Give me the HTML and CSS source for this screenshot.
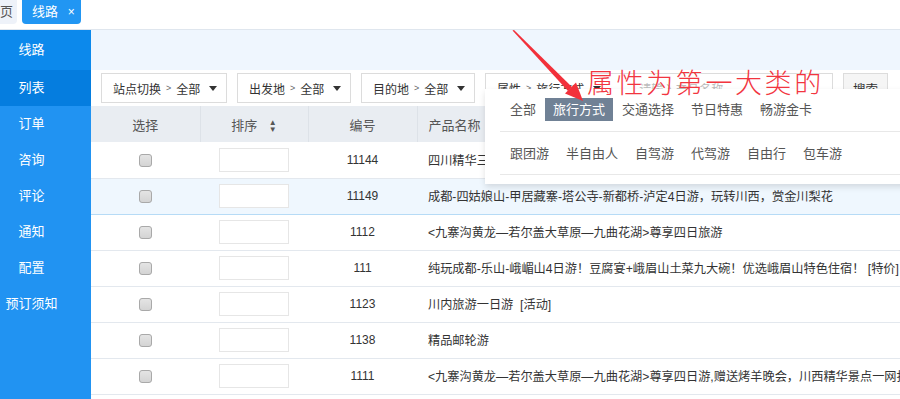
FILE: index.html
```html
<!DOCTYPE html>
<html lang="zh-CN">
<head>
    <meta charset="UTF-8">
    <title>线路列表</title>
    <link rel="stylesheet" href="styles.css">
</head>
<body>
    <div class="tabs">
        <div class="tab">页</div>
        <div class="tab active">线路 <span class="close">×</span></div>
    </div>

    <div class="layout">
        <div class="sidebar">
            <div class="menu-title">线路</div>
            <div class="menu-item current">列表</div>
            <div class="menu-item">订单</div>
            <div class="menu-item">咨询</div>
            <div class="menu-item">评论</div>
            <div class="menu-item">通知</div>
            <div class="menu-item">配置</div>
            <div class="menu-item">预订须知</div>
        </div>

        <div class="main">
            <div class="band"></div>

            <div class="filters">
                <div class="select w1">站点切换 <span class="sep">&gt;</span> 全部 <i class="caret"></i></div>
                <div class="select w2">出发地 <span class="sep">&gt;</span> 全部 <i class="caret"></i></div>
                <div class="select w2">目的地 <span class="sep">&gt;</span> 全部 <i class="caret"></i></div>
                <div class="select attr">属性 <span class="sep">&gt;</span> 旅行方式 <i class="caret"></i>
                    <span class="placeholder">请输入产品名称</span>
                </div>
                <button class="search">搜索</button>
            </div>

            <table class="grid">
                <colgroup>
                    <col style="width:109px">
                    <col style="width:108px">
                    <col style="width:109px">
                    <col>
                </colgroup>
                <thead>
                    <tr>
                        <th>选择</th>
                        <th>排序 <span class="sort">&#9650;<br>&#9660;</span></th>
                        <th>编号</th>
                        <th class="name">产品名称</th>
                    </tr>
                </thead>
                <tbody>
                    <tr>
                        <td><input type="checkbox"></td>
                        <td><input type="text" class="order"></td>
                        <td>11144</td>
                        <td class="name">四川精华三日游</td>
                    </tr>
                    <tr class="hover">
                        <td><input type="checkbox"></td>
                        <td><input type="text" class="order"></td>
                        <td>11149</td>
                        <td class="name">成都-四姑娘山-甲居藏寨-塔公寺-新都桥-泸定4日游，玩转川西，赏金川梨花</td>
                    </tr>
                    <tr>
                        <td><input type="checkbox"></td>
                        <td><input type="text" class="order"></td>
                        <td>1112</td>
                        <td class="name">&lt;九寨沟黄龙—若尔盖大草原—九曲花湖&gt;尊享四日旅游</td>
                    </tr>
                    <tr>
                        <td><input type="checkbox"></td>
                        <td><input type="text" class="order"></td>
                        <td>111</td>
                        <td class="name">纯玩成都-乐山-峨嵋山4日游！豆腐宴+峨眉山土菜九大碗！优选峨眉山特色住宿！ [特价]</td>
                    </tr>
                    <tr>
                        <td><input type="checkbox"></td>
                        <td><input type="text" class="order"></td>
                        <td>1123</td>
                        <td class="name">川内旅游一日游 &nbsp;[活动]</td>
                    </tr>
                    <tr>
                        <td><input type="checkbox"></td>
                        <td><input type="text" class="order"></td>
                        <td>1138</td>
                        <td class="name">精品邮轮游</td>
                    </tr>
                    <tr>
                        <td><input type="checkbox"></td>
                        <td><input type="text" class="order"></td>
                        <td>1111</td>
                        <td class="name">&lt;九寨沟黄龙—若尔盖大草原—九曲花湖&gt;尊享四日游,赠送烤羊晚会，川西精华景点一网打尽</td>
                    </tr>
                    <tr>
                        <td><input type="checkbox"></td>
                        <td><input type="text" class="order"></td>
                        <td>1110</td>
                        <td class="name">成都周边二日游</td>
                    </tr>
                </tbody>
            </table>

            <!-- attribute dropdown, open -->
            <div class="attr-menu">
                <div class="attr-row">
                    <span class="opt">全部</span>
                    <span class="opt on">旅行方式</span>
                    <span class="opt">交通选择</span>
                    <span class="opt">节日特惠</span>
                    <span class="opt">畅游金卡</span>
                </div>
                <div class="attr-row">
                    <span class="opt">跟团游</span>
                    <span class="opt">半自由人</span>
                    <span class="opt">自驾游</span>
                    <span class="opt">代驾游</span>
                    <span class="opt">自由行</span>
                    <span class="opt">包车游</span>
                </div>
            </div>
        </div>
    </div>

    <!-- annotation -->
    <svg class="arrow" width="900" height="399" viewBox="0 0 900 399">
        <polygon points="512.5,30.5 514,30 572,87 568,91" fill="#f2303a"/>
        <polygon points="583,101 576,82.5 565,93.5" fill="#f2303a"/>
    </svg>
    <div class="note">属性为第一大类的</div>
</body>
</html>
```

FILE: styles.css
```css
* {
    box-sizing: border-box;
    margin: 0;
    padding: 0;
}

body {
    font-family: "Liberation Sans", "Noto Sans CJK SC", sans-serif;
    font-size: 12px;
    color: #333;
    background: #fff;
    width: 900px;
    height: 399px;
    overflow: hidden;
    position: relative;
}

.tabs {
    height: 30px;
    display: flex;
    gap: 5px;
    border-bottom: 1px solid #dfe6ee;
}

.tab {
    height: 24px;
    line-height: 23px;
    padding: 0 6px 0 0;
    background: #eef2f9;
    color: #555;
    font-size: 13px;
    border-radius: 0 0 4px 0;
    width: 17px;
    overflow: hidden;
    text-align: right;
}

.tab.active {
    width: 59px;
    background: #2196f3;
    color: #fff;
    padding: 0 0 0 10px;
    text-align: left;
    border-radius: 0 0 4px 4px;
}

.tab .close {
    font-size: 12px;
    margin-left: 6px;
}

.layout {
    display: flex;
    height: 369px;
}

.sidebar {
    width: 91px;
    flex: none;
    background: #2193f2;
    color: #fff;
    font-size: 13px;
}

.menu-title {
    height: 40px;
    line-height: 40px;
    background: #0c89ec;
    padding-right: 28px;
    text-align: center;
}

.menu-item {
    height: 36px;
    line-height: 36px;
    padding-right: 28px;
    text-align: center;
}

.menu-item.current {
    background: #057ddf;
}

.main {
    flex: 1;
    position: relative;
    overflow: hidden;
}

.band {
    height: 40px;
    background: #eff6fe;
}

.filters {
    display: flex;
    gap: 10px;
    padding: 3px 10px;
    height: 36px;
}

.select {
    height: 30px;
    border: 1px solid #dcdcdc;
    background: #fff;
    display: flex;
    align-items: center;
    padding: 0 11px;
    color: #333;
    font-size: 12px;
    white-space: nowrap;
}

.select.w1 { width: 126px; }
.select.w2 { width: 114px; }
.select.attr { width: 348px; }

.sep {
    font-size: 9px;
    color: #666;
    margin: 0 5px;
}

.caret {
    display: inline-block;
    border-left: 4px solid transparent;
    border-right: 4px solid transparent;
    border-top: 5px solid #333;
    margin-left: 9px;
}

.placeholder {
    color: #bbb;
    margin-left: 38px;
}

.search {
    width: 45px;
    height: 30px;
    border: 1px solid #dcdcdc;
    background: #f5f5f5;
    font-family: inherit;
    font-size: 12.5px;
    color: #333;
}

.grid {
    width: 100%;
    border-collapse: collapse;
    table-layout: fixed;
}

.grid th {
    height: 36px;
    background: #e9edf2;
    color: #555;
    font-weight: normal;
    font-size: 13px;
    border-left: 1px solid #dde2e8;
    text-align: center;
}

.grid th:first-child {
    border-left: none;
}

.grid td {
    height: 36px;
    text-align: center;
    border-bottom: 1px solid #e3e8ee;
    white-space: nowrap;
    overflow: hidden;
}

.grid td.name {
    text-align: left;
    padding-left: 11px;
    font-size: 12.2px;
}

.grid th.name {
    text-align: left;
    padding-left: 11px;
}

.grid tr.hover td {
    background: #eff7fe;
    border-bottom-color: #b6dbf6;
}

.sort {
    display: inline-block;
    vertical-align: middle;
    font-size: 8px;
    line-height: 7px;
    color: #555;
    margin-left: 8px;
}

input[type="checkbox"] {
    appearance: none;
    -webkit-appearance: none;
    width: 13px;
    height: 13px;
    border: 1px solid #a9a9a9;
    border-radius: 3px;
    background: linear-gradient(#e4e4e4, #d4d4d4);
    vertical-align: middle;
}

.order {
    width: 70px;
    height: 24px;
    border: 1px solid #e6e6e6;
    outline: none;
    vertical-align: middle;
}

.attr-menu {
    position: absolute;
    left: 394px;
    top: 59px;
    width: 440px;
    background: #fff;
    padding: 0 0 9px 15px;
    box-shadow: 0 3px 6px rgba(0, 0, 0, 0.12);
}

.attr-row {
    display: flex;
    gap: 1px;
    padding: 9px 0 10px 2px;
    border-bottom: 1px solid #e8e8e8;
}

.attr-row + .attr-row {
    padding: 10px 0 9px 2px;
}

.opt {
    height: 23px;
    line-height: 23px;
    padding: 0 8px;
    font-size: 13px;
    color: #555;
    white-space: nowrap;
}

.opt.on {
    background: #708195;
    color: #fff;
}

.arrow {
    position: absolute;
    left: 0;
    top: 0;
    pointer-events: none;
}

.note {
    position: absolute;
    left: 587px;
    top: 66px;
    font-family: "Noto Sans CJK SC", sans-serif;
    font-weight: 300;
    font-size: 27px;
    line-height: 32px;
    letter-spacing: 2.6px;
    color: #f2353f;
    white-space: nowrap;
}
```
